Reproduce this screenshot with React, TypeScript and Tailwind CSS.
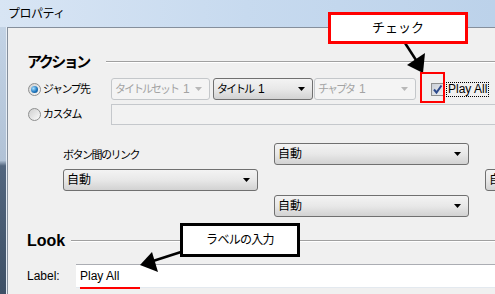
import React from "react";

function Caret({ disabled }: { disabled?: boolean }) {
  return (
    <svg width="7" height="4" viewBox="0 0 7 4" className={disabled ? "text-[#b8b8b8]" : "text-black"}>
      <path d="M0 0h7L3.5 4z" fill="currentColor" />
    </svg>
  );
}

function Select({ text, num, className, disabled }: { text: string; num: string; className: string; disabled?: boolean }) {
  return (
    <div
      className={`h-[22px] shrink-0 flex items-center justify-between pl-[3px] pr-[7px] rounded-[3px] border ${
        disabled
          ? "border-[#c4c7ca] bg-[#f4f4f4] text-[#a3a3a3]"
          : "border-[#707070] bg-linear-to-b from-[#f3f3f3] via-[#e8e8e8] to-[#d2d2d2] text-black"
      } ${className}`}
    >
      <span className="flex items-center whitespace-nowrap leading-none">
        <span className="text-[11px] tracking-[-2px]">{text}</span>
        <span className="ml-[5px] text-[12px]">{num}</span>
      </span>
      <Caret disabled={disabled} />
    </div>
  );
}

function AutoSelect({ className }: { className: string }) {
  return (
    <div
      className={`h-[22px] shrink-0 flex items-center justify-between pl-[3px] pr-[7px] rounded-[3px] border border-[#707070] bg-linear-to-b from-[#f3f3f3] via-[#e8e8e8] to-[#d2d2d2] ${className}`}
    >
      <span className="text-[12px] leading-none">自動</span>
      <Caret />
    </div>
  );
}

function Radio({ checked }: { checked?: boolean }) {
  return (
    <span className="w-[13px] h-[13px] shrink-0 rounded-full border border-[#8e8f8f] bg-linear-to-br from-[#cfcfcf] to-[#fbfbfb] flex items-center justify-center">
      {checked && (
        <span className="w-[7px] h-[7px] rounded-full bg-[radial-gradient(circle_at_35%_35%,#a8e0ff,#1f78c0_55%,#0b4477)]" />
      )}
    </span>
  );
}

function Etched({ className }: { className: string }) {
  return <div className={`flex-1 h-0 border-t border-t-[#a0a0a0] border-b border-b-white ${className}`} />;
}

export default function App() {
  return (
    <div className="relative w-[495px] h-[294px] overflow-hidden font-['Liberation_Sans','Noto_Sans_CJK_JP',sans-serif] text-black bg-linear-to-r from-[#d8e5f4] via-[#c7daef] to-[#bcd2ea]">
      <div className="h-[27px] flex items-center pl-[8px] text-[12px] tracking-[-0.5px]">プロパティ</div>

      <div className="flex h-[267px]">
        <div className="w-[7px] shrink-0 border-r border-r-[#e6edf5] bg-[linear-gradient(to_bottom,#c3d3e5_0%,#b1c2d6_50%,#52667f_52%,#3e5066_100%)]" />
        <div className="flex-1 overflow-hidden border-l border-t border-[#858f9c] bg-[#f0f0f0] pl-[19px] pt-[24px]">
          <div className="h-[20px] flex items-center">
            <span className="text-[15px] font-bold tracking-[-2.5px]">アクション</span>
            <Etched className="ml-[17px]" />
          </div>

          <div className="mt-[6px] h-[22px] flex items-center">
            <div className="w-[84px] shrink-0 flex items-center">
              <span className="ml-[1px]">
                <Radio checked />
              </span>
              <span className="ml-[2px] text-[11px] tracking-[-1.5px]">ジャンプ先</span>
            </div>
            <Select text="タイトルセット" num="1" className="w-[99px]" disabled />
            <Select text="タイトル" num="1" className="w-[100px] ml-[3px]" />
            <Select text="チャプタ" num="1" className="w-[102px] ml-[1px]" disabled />
            <span className="ml-[15px] w-[13px] h-[13px] shrink-0 border border-[#8e8f8f] bg-linear-to-br from-[#c9ced6] to-[#eef0f3] flex items-center justify-center">
              <svg width="11" height="11" viewBox="0 0 11 11">
                <path d="M2 5.5 L4.5 8.5 L9.5 1.5" fill="none" stroke="#2d4a8c" strokeWidth="2" />
              </svg>
            </span>
            <span className="ml-[2px] px-[1px] border border-dotted border-black text-[12px] leading-[13px] whitespace-nowrap">
              Play All
            </span>
          </div>

          <div className="mt-[4px] h-[21px] flex items-center">
            <div className="w-[84px] shrink-0 flex items-center">
              <span className="ml-[1px]">
                <Radio />
              </span>
              <span className="ml-[2px] text-[11px] tracking-[-1.5px]">カスタム</span>
            </div>
            <div className="flex-1 h-[21px] -mr-[4px] border border-[#c5c8cc] bg-[#f2f2f2]" />
          </div>

          <div className="flex items-start">
            <div className="ml-[36px] w-[195px] shrink-0 pt-[23px] flex flex-col">
              <span className="h-[14px] leading-[14px] text-[11px] tracking-[-1.5px]">ボタン間のリンク</span>
              <AutoSelect className="mt-[7px] w-[195px]" />
            </div>
            <div className="ml-[16px] w-[195px] shrink-0 pt-[18px] flex flex-col">
              <AutoSelect className="w-[195px]" />
              <AutoSelect className="mt-[30px] w-[195px]" />
            </div>
            <div className="ml-[16px] w-[100px] shrink-0 pt-[44px]">
              <AutoSelect className="w-[100px]" />
            </div>
          </div>

          <div className="mt-[14px] h-[20px] flex items-center">
            <span className="text-[16px] font-bold">Look</span>
            <Etched className="ml-[6px]" />
          </div>

          <div className="mt-[13px] h-[24px] flex items-center">
            <span className="w-[49px] shrink-0 text-[12px]">Label:</span>
            <div className="flex-1 h-[24px] flex items-center pl-[4px] bg-white border-t border-t-[#abadb3] border-b border-b-[#e3e9ef] text-[12px]">
              Play All
            </div>
          </div>
        </div>
      </div>

      <div className="absolute left-[80px] top-[287px] w-[60px] h-[2px] bg-[#ff0000]" />

      <svg className="absolute left-0 top-0 pointer-events-none" width="495" height="294">
        <line x1="405" y1="43" x2="416" y2="60" stroke="black" strokeWidth="2.5" />
        <polygon points="423,73 407,65 425,53" fill="black" />
        <line x1="181" y1="252" x2="153" y2="261" stroke="black" strokeWidth="2.5" />
        <polygon points="140,265 152,252 158,272" fill="black" />
      </svg>

      <div className="absolute left-[420px] top-[72px] w-[25px] h-[31px] border-2 border-[#ff0000]" />

      <div className="absolute left-[328px] top-[12px] w-[140px] h-[32px] border-[3px] border-[#ff0000] bg-white flex items-center justify-center text-[13px]">
        チェック
      </div>

      <div className="absolute left-[180px] top-[223px] w-[120px] h-[34px] border-[3px] border-black bg-white flex items-center justify-center text-[12px] tracking-[-0.7px]">
        ラベルの入力
      </div>
    </div>
  );
}
